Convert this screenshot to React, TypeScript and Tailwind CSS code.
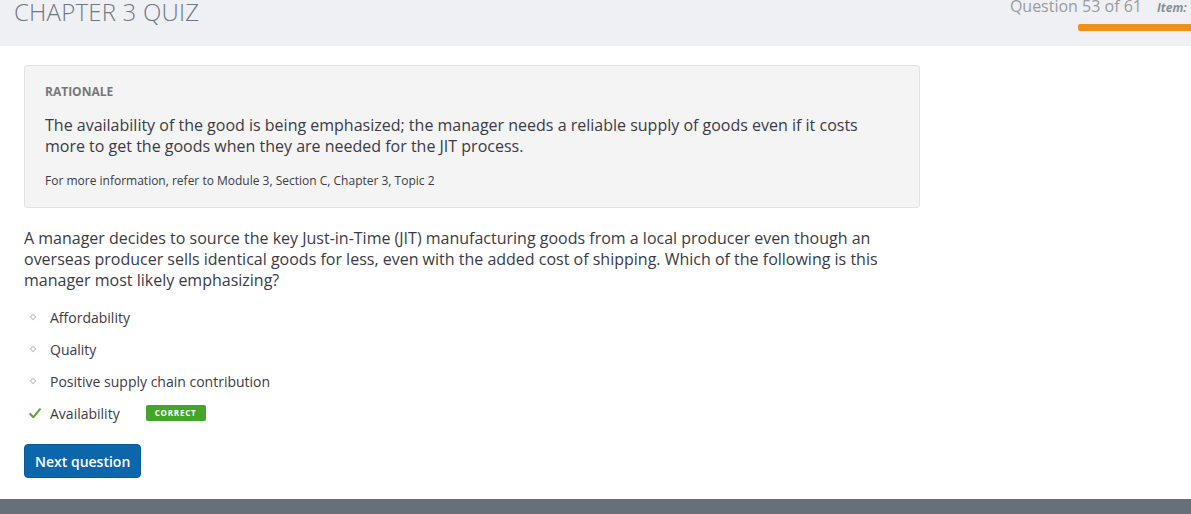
const options = [
  { label: "Affordability", correct: false },
  { label: "Quality", correct: false },
  { label: "Positive supply chain contribution", correct: false },
  { label: "Availability", correct: true },
];

function Bullet() {
  return (
    <svg width="8" height="8" viewBox="0 0 8 8" className="shrink-0">
      <path d="M4 1.2 L6.8 4 L4 6.8 L1.2 4 Z" fill="none" stroke="#c4c4c4" strokeWidth="1.1" />
    </svg>
  );
}

function Check() {
  return (
    <svg width="12" height="11" viewBox="0 0 12 11" className="shrink-0">
      <path d="M1.2 6 L4.3 9.3 L11 1.2" fill="none" stroke="#5c9e2f" strokeWidth="2" strokeLinecap="round" strokeLinejoin="round" />
    </svg>
  );
}

export default function App() {
  return (
    <div className="w-[1191px] h-[514px] bg-white overflow-hidden flex flex-col font-['Open_Sans',sans-serif]">
      {/* Header */}
      <div className="h-[46px] bg-[#eff0f4] flex justify-between shrink-0 overflow-hidden">
        <div className="pl-[14px] -mt-[8px] text-[24px] font-light text-[#6d7886] leading-[40px] tracking-[0.2px]">
          CHAPTER 3 QUIZ
        </div>
        <div className="flex flex-col items-end">
          <div className="flex items-baseline -mt-[6px] gap-[15px] whitespace-nowrap">
            <span className="text-[16px] text-[#999ba0] leading-[24px]">Question 53 of 61</span>
            <span className="text-[12px] italic font-bold text-[#8a8f96] w-[34px] overflow-hidden">Item:</span>
          </div>
          <div className="mt-[6px] h-[7px] w-[113px] bg-[#f28f1c] rounded-l-[2px]" />
        </div>
      </div>

      <div className="flex-1 pl-[24px] pt-[19px]">
        {/* Rationale */}
        <div className="w-[896px] h-[143px] bg-[#f4f4f4] border border-[#e2e2e2] rounded-[3px] px-[20px] pt-[17px]">
          <div className="text-[12px] font-bold text-[#777] leading-[18px]">RATIONALE</div>
          <p className="mt-[14px] text-[16px] text-[#3b3b45] leading-[21px] w-[830px]">
            The availability of the good is being emphasized; the manager needs a reliable supply of goods even if it costs more to get the goods when they are needed for the JIT process.
          </p>
          <p className="mt-[15px] text-[12px] text-[#3b3b45] leading-[18px]">
            For more information, refer to Module 3, Section C, Chapter 3, Topic 2
          </p>
        </div>

        {/* Question */}
        <p className="mt-[20px] w-[880px] text-[16px] text-[#3b3b45] leading-[21px]">
          A manager decides to source the key Just-in-Time (JIT) manufacturing goods from a local producer even though an overseas producer sells identical goods for less, even with the added cost of shipping. Which of the following is this manager most likely emphasizing?
        </p>

        <ul className="mt-[10px] flex flex-col">
          {options.map((o) => (
            <li key={o.label} className="h-[32px] flex items-center text-[14px] text-[#3b3b45]">
              <span className="w-[26px] flex pl-[5px]">{o.correct ? <Check /> : <Bullet />}</span>
              <span>{o.label}</span>
              {o.correct && (
                <span className="ml-[26px] h-[16px] px-[9px] flex items-center bg-[#43a62b] rounded-[2px] text-white text-[8px] font-bold tracking-[0.8px]">
                  CORRECT
                </span>
              )}
            </li>
          ))}
        </ul>

        <button className="mt-[15px] h-[34px] px-[10px] bg-[#0b66ac] border border-[#0a5a98] rounded-[4px] text-white text-[14px] font-semibold">
          Next question
        </button>
      </div>

      {/* Footer */}
      <div className="h-[15px] bg-[#67707a] shrink-0" />
    </div>
  );
}
